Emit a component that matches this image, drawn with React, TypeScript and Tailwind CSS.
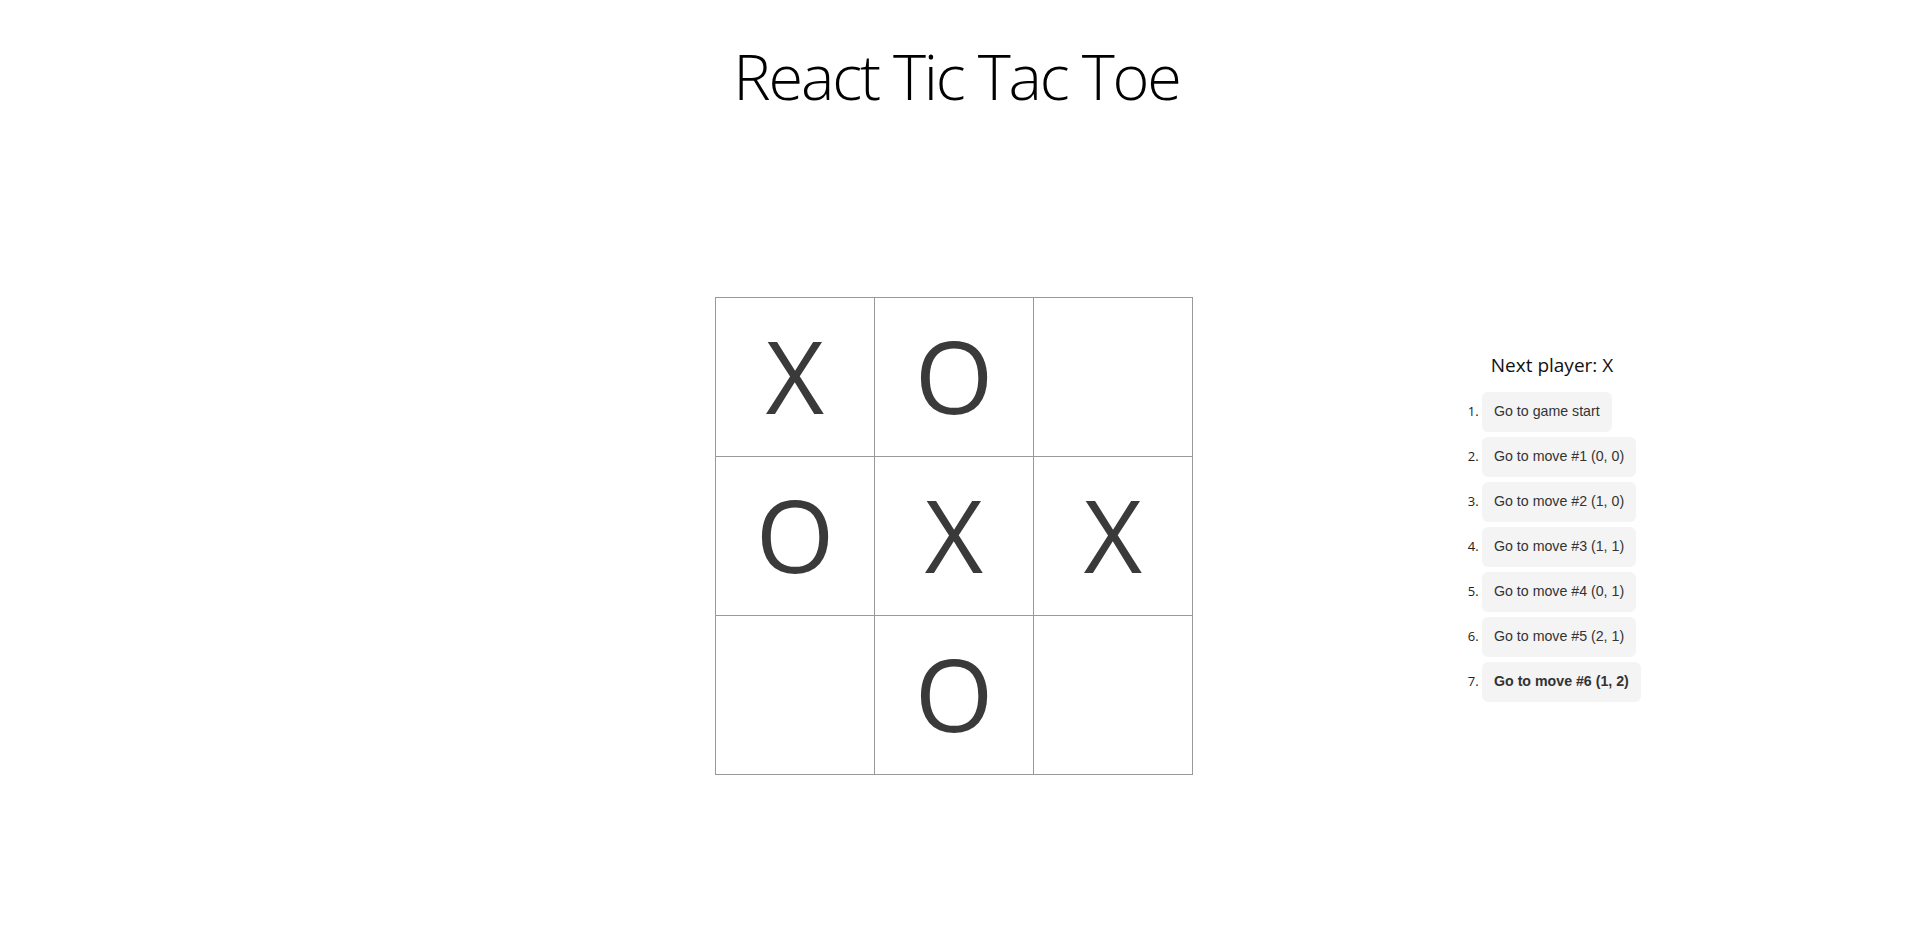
import React, { useState } from "react";

type Cell = "X" | "O" | null;

const moves: Array<{ label: string; bold?: boolean }> = [
  { label: "Go to game start" },
  { label: "Go to move #1 (0, 0)" },
  { label: "Go to move #2 (1, 0)" },
  { label: "Go to move #3 (1, 1)" },
  { label: "Go to move #4 (0, 1)" },
  { label: "Go to move #5 (2, 1)" },
  { label: "Go to move #6 (1, 2)", bold: true },
];

function Square({ value }: { value: Cell }) {
  return (
    <button className="flex h-[159px] w-[159px] items-center justify-center border-r border-b border-[#999] bg-white pb-[4px] font-['Open_Sans',sans-serif] text-[101px] leading-none text-[#3a3a3a]">
      {value}
    </button>
  );
}

export default function App() {
  const [squares] = useState<Cell[]>(["X", "O", null, "O", "X", "X", null, "O", null]);

  return (
    <div className="min-h-screen w-full bg-white">
      <h1 className="mt-[33px] text-center font-['Open_Sans',sans-serif] text-[63px] font-light leading-[86px] tracking-[-2.2px] text-black">
        React Tic Tac Toe
      </h1>

      <div className="mt-[178px] grid grid-cols-[715px_478px_1fr] items-start">
        <div />
        {/* Board */}
        <div className="grid w-[478px] grid-cols-3 border-t border-l border-[#999]">
          {squares.map((v, i) => (
            <Square key={i} value={v} />
          ))}
        </div>

        {/* Game info */}
        <div className="mt-[55px] ml-[249px] w-[220px]">
          <div className="text-center font-['Open_Sans',sans-serif] text-[19px] leading-[26px] text-[#111]">
            Next player: X
          </div>
          <ol className="mt-[14px] list-decimal pl-[40px] font-['Open_Sans',sans-serif] text-[13px] text-[#222]">
            {moves.map((m, i) => (
              <li key={i} className="mb-[5px]">
                <button
                  className={`h-[40px] rounded-md bg-[#f4f4f4] px-3 font-['Liberation_Sans',Arial,sans-serif] text-[14.2px] text-[#333] ${
                    m.bold ? "font-bold" : ""
                  }`}
                >
                  {m.label}
                </button>
              </li>
            ))}
          </ol>
        </div>
      </div>
    </div>
  );
}
